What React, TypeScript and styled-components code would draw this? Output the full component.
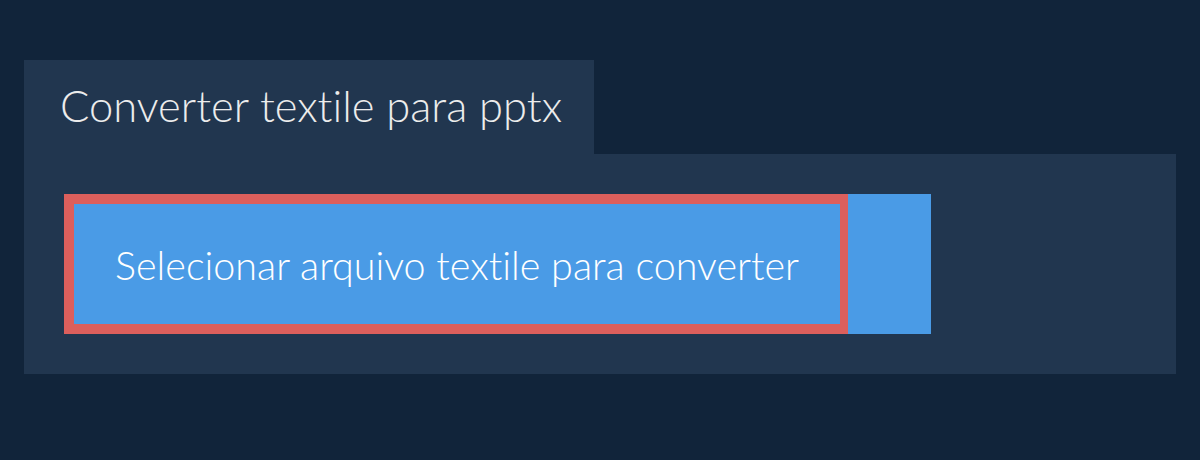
import styled, { createGlobalStyle } from 'styled-components';

const GlobalStyle = createGlobalStyle`
  html, body {
    margin: 0;
    padding: 0;
    background: #11243a;
    font-family: Lato, 'Open Sans', sans-serif;
    font-variant-ligatures: none;
  }
`;

const Page = styled.div`
  padding: 60px 24px 0;
`;

const Tab = styled.div`
  display: inline-flex;
  align-items: center;
  height: 94px;
  padding: 0 32px 4px 36px;
  box-sizing: border-box;
  background: #21364f;
  color: #ececec;
  font-size: 43.5px;
  font-weight: 300;
`;

const Panel = styled.div`
  background: #21364f;
  padding: 40px;
  height: 220px;
  box-sizing: border-box;
`;

const Upload = styled.div`
  display: flex;
  width: 867px;
  height: 140px;
  background: #4a9be6;
`;

const Picker = styled.button`
  width: 784px;
  height: 140px;
  box-sizing: border-box;
  border: 10px solid #dc5f5c;
  border-right-width: 8px;
  background: #4a9be6;
  color: #ffffff;
  font-family: Lato, 'Open Sans', sans-serif;
  font-variant-ligatures: none;
  font-size: 39.5px;
  font-weight: 300;
  cursor: pointer;
`;

export default function App() {
  return (
    <>
      <GlobalStyle />
      <Page>
        <Tab>Converter textile para pptx</Tab>
        <Panel>
          <Upload>
            <Picker>Selecionar arquivo textile para converter</Picker>
          </Upload>
        </Panel>
      </Page>
    </>
  );
}
